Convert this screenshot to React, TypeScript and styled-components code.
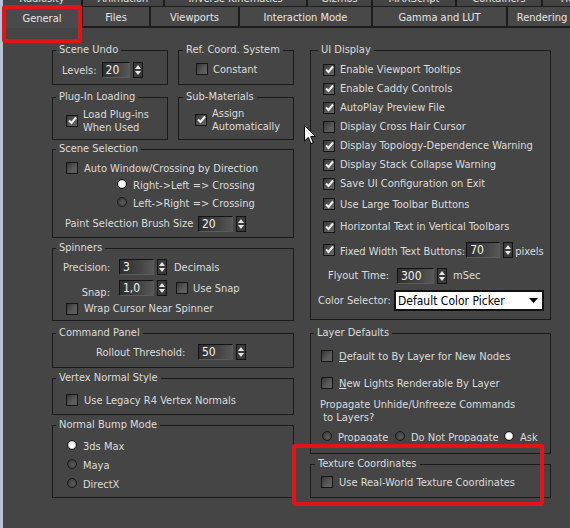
import React from "react";
import styled, { createGlobalStyle } from "styled-components";

const Global = createGlobalStyle`
  html, body { margin: 0; padding: 0; background: #454545; }
  body {
    font-family: "DejaVu Sans Condensed", "Liberation Sans", sans-serif;
    font-size: 11px;
    color: #dcdcdc;
  }
  * { box-sizing: border-box; }
`;

const Screen = styled.div`
  position: relative;
  width: 570px;
  height: 528px;
  overflow: hidden;
  display: flex;
  background: #454545;
`;

const Strip = styled.div`
  flex: none;
  width: 3px;
  background: #b9c3d3;
`;

const Main = styled.div`
  flex: 1;
  min-width: 0;
  display: flex;
  flex-direction: column;
`;

const TabRow = styled.div<{ $h: number }>`
  flex: none;
  display: flex;
  height: ${(p) => p.$h}px;
  overflow: hidden;
`;

const TopTab = styled.div<{ $w: number }>`
  flex: none;
  width: ${(p) => p.$w}px;
  height: 7px;
  display: flex;
  align-items: flex-end;
  justify-content: center;
  overflow: hidden;
  background: #434343;
  border-right: 2px solid #1c1c1c;
  border-bottom: 1px solid #1c1c1c;
  color: #e4e4e4;
  white-space: nowrap;
`;

const TopTabText = styled.span`
  line-height: 14px;
  margin-bottom: 0;
`;

const Tab = styled.div<{ $w: number; $active?: boolean }>`
  flex: none;
  width: ${(p) => p.$w}px;
  height: 21px;
  display: flex;
  align-items: center;
  justify-content: center;
  background: ${(p) => (p.$active ? "#4a4a4a" : "#484848")};
  border-right: 2px solid #1c1c1c;
  border-bottom: ${(p) => (p.$active ? "0" : "2px solid #1c1c1c")};
  color: #e6e6e6;
  white-space: nowrap;
  padding-top: 1px;
`;

const Content = styled.div`
  flex: 1;
  display: flex;
  gap: 16px;
  padding: 15px 0 0 49px;
`;

const Column = styled.div<{ $w: number }>`
  flex: none;
  width: ${(p) => p.$w}px;
  display: flex;
  flex-direction: column;
`;

const Pair = styled.div<{ $mt?: number }>`
  display: flex;
  gap: 10px;
  margin-top: ${(p) => p.$mt ?? 0}px;
`;

const Group = styled.fieldset<{ $h: number; $mt?: number; $w?: number }>`
  margin: ${(p) => p.$mt ?? 0}px 0 0 0;
  padding: 0;
  border: 1px solid #1a1a1a;
  height: ${(p) => p.$h}px;
  min-width: 0;
  ${(p) => (p.$w ? `width: ${p.$w}px; flex: none;` : "")}
`;

const Legend = styled.legend<{ $ml?: number }>`
  margin-left: ${(p) => p.$ml ?? 3}px;
  padding: 0 3px;
  line-height: 14px;
  font-size: 11px;
  color: #dcdcdc;
  white-space: nowrap;
`;

const Body = styled.div<{ $pt: number }>`
  display: flex;
  flex-direction: column;
  padding-top: ${(p) => p.$pt}px;
`;

const Row = styled.div<{ $h: number; $pl: number; $mt?: number; $end?: boolean; $clip?: boolean }>`
  display: flex;
  align-items: ${(p) => (p.$end ? "flex-start" : "center")};
  height: ${(p) => p.$h}px;
  padding-left: ${(p) => p.$pl}px;
  margin-top: ${(p) => p.$mt ?? 0}px;
  white-space: nowrap;
  overflow: ${(p) => (p.$clip ? "hidden" : "visible")};
`;

const Label = styled.span<{ $w?: number; $right?: boolean; $ml?: number; $dy?: number }>`
  flex: none;
  ${(p) => (p.$w ? `width: ${p.$w}px;` : "")}
  text-align: ${(p) => (p.$right ? "right" : "left")};
  margin-left: ${(p) => p.$ml ?? 0}px;
  position: relative;
  top: ${(p) => p.$dy ?? 0}px;
  line-height: 13px;
  color: #dcdcdc;
`;

const Lines = styled.span<{ $ml?: number }>`
  display: flex;
  flex-direction: column;
  margin-left: ${(p) => p.$ml ?? 0}px;
  line-height: 13px;
  color: #dcdcdc;
`;

const Box = styled.span<{ $ml?: number }>`
  flex: none;
  width: 12px;
  height: 12px;
  margin-left: ${(p) => p.$ml ?? 0}px;
  border: 1px solid #151515;
  background: linear-gradient(135deg, #363636 0%, #5a5a5a 60%, #626262 100%);
  display: inline-flex;
  align-items: center;
  justify-content: center;
`;

const RadioDot = styled.span<{ $on?: boolean }>`
  flex: none;
  width: 10px;
  height: 10px;
  border-radius: 50%;
  border: 1px solid #1a1a1a;
  background: ${(p) =>
    p.$on
      ? "radial-gradient(circle at 50% 50%, #ffffff 0 2.5px, #cfcfcf 3.5px, #8a8a8a 100%)"
      : "radial-gradient(circle at 60% 60%, #5c5c5c 0, #444444 60%, #262626 100%)"};
`;

const RadioItem = styled.span<{ $w?: number }>`
  display: flex;
  align-items: flex-start;
  ${(p) => (p.$w ? `width: ${p.$w}px; flex: none;` : "")}
`;

const RadioText = styled.span`
  margin-left: 6px;
  line-height: 14px;
  color: #dcdcdc;
`;

const Field = styled.span<{ $w: number; $ml?: number }>`
  flex: none;
  width: ${(p) => p.$w}px;
  height: 16px;
  margin-left: ${(p) => p.$ml ?? 0}px;
  border: 1px solid #121212;
  border-right-color: #5c5c5c;
  border-bottom-color: #5c5c5c;
  background: linear-gradient(90deg, #303030 0%, #444444 60%, #575757 100%);
  color: #f2f2f2;
  font-size: 12px;
  line-height: 14px;
  padding-left: 3px;
`;

const Arrows = styled.span`
  flex: none;
  width: 10px;
  height: 16px;
  margin-left: 3px;
  border: 1px solid #141414;
  background: #3b3b3b;
  display: flex;
  flex-direction: column;
  align-items: center;
  justify-content: center;
  gap: 2px;
`;

const Select = styled.span`
  flex: none;
  width: 150px;
  height: 21px;
  border: 2px solid #111;
  background: #fff;
  color: #000;
  display: flex;
  align-items: center;
  justify-content: space-between;
  padding: 0 4px 0 2px;
  font-size: 12px;
`;

const Highlight = styled.div<{ $x: number; $y: number; $w: number; $h: number }>`
  position: absolute;
  left: ${(p) => p.$x}px;
  top: ${(p) => p.$y}px;
  width: ${(p) => p.$w}px;
  height: ${(p) => p.$h}px;
  border: 4px solid #e2141a;
  border-radius: 3px;
  pointer-events: none;
`;

const Cursor = styled.svg`
  position: absolute;
  left: 304px;
  top: 125px;
`;

const Check = ({ on, ml }: { on?: boolean; ml?: number }) => (
  <Box $ml={ml}>
    {on && (
      <svg width="9" height="9" viewBox="0 0 9 9">
        <polyline points="1,4.5 3.5,7 8,1.5" fill="none" stroke="#f0f0f0" strokeWidth="2" />
      </svg>
    )}
  </Box>
);

const Spinner = ({ value, w, ml }: { value: string; w: number; ml?: number }) => (
  <>
    <Field $w={w} $ml={ml}>{value}</Field>
    <Arrows>
      <svg width="6" height="4" viewBox="0 0 6 4">
        <polygon points="3,0 6,4 0,4" fill="#e8e8e8" />
      </svg>
      <svg width="6" height="4" viewBox="0 0 6 4">
        <polygon points="0,0 6,0 3,4" fill="#e8e8e8" />
      </svg>
    </Arrows>
  </>
);

const topTabs: [string, number][] = [
  ["Radiosity", 80],
  ["Animation", 82],
  ["Inverse Kinematics", 143],
  ["Gizmos", 65],
  ["MAXScript", 84],
  ["Containers", 86],
  ["Help", 60],
];

const tabs: [string, number][] = [
  ["General", 80],
  ["Files", 68],
  ["Viewports", 89],
  ["Interaction Mode", 133],
  ["Gamma and LUT", 135],
  ["Rendering", 70],
];

const uiRows: [string, boolean, number][] = [
  ["Enable Viewport Tooltips", true, 19],
  ["Enable Caddy Controls", true, 19],
  ["AutoPlay Preview File", true, 19],
  ["Display Cross Hair Cursor", false, 19],
  ["Display Topology-Dependence Warning", true, 19],
  ["Display Stack Collapse Warning", true, 19],
  ["Save UI Configuration on Exit", true, 19],
  ["Use Large Toolbar Buttons", true, 22],
  ["Horizontal Text in Vertical Toolbars", true, 23],
];

export default function App() {
  return (
    <>
      <Global />
      <Screen>
        <Strip />
        <Main>
          <TabRow $h={7}>
            {topTabs.map(([t, w]) => (
              <TopTab key={t} $w={w}>
                <TopTabText>{t}</TopTabText>
              </TopTab>
            ))}
          </TabRow>
          <TabRow $h={21}>
            {tabs.map(([t, w], i) => (
              <Tab key={t} $w={w} $active={i === 0}>
                {t}
              </Tab>
            ))}
          </TabRow>
          <Content>
            <Column $w={242}>
              <Pair>
                <Group $h={42} $w={116}>
                  <Legend>Scene Undo</Legend>
                  <Body $pt={5}>
                    <Row $h={16} $pl={9}>
                      <Label>Levels:</Label>
                      <Spinner value="20" w={28} ml={5} />
                    </Row>
                  </Body>
                </Group>
                <Group $h={42} $w={116}>
                  <Legend $ml={4}>Ref. Coord. System</Legend>
                  <Body $pt={4}>
                    <Row $h={16} $pl={17}>
                      <Check />
                      <Label $ml={5}>Constant</Label>
                    </Row>
                  </Body>
                </Group>
              </Pair>
              <Pair $mt={5}>
                <Group $h={50} $w={116}>
                  <Legend>Plug-In Loading</Legend>
                  <Body $pt={3}>
                    <Row $h={27} $pl={13}>
                      <Check on />
                      <Lines $ml={5}>
                        <span>Load Plug-ins</span>
                        <span>When Used</span>
                      </Lines>
                    </Row>
                  </Body>
                </Group>
                <Group $h={50} $w={116}>
                  <Legend $ml={4}>Sub-Materials</Legend>
                  <Body $pt={2}>
                    <Row $h={27} $pl={16}>
                      <Check on />
                      <Lines $ml={5}>
                        <span>Assign</span>
                        <span>Automatically</span>
                      </Lines>
                    </Row>
                  </Body>
                </Group>
              </Pair>
              <Group $h={96} $mt={2}>
                <Legend>Scene Selection</Legend>
                <Body $pt={3}>
                  <Row $h={18} $pl={13}>
                    <Check />
                    <Label $ml={6}>Auto Window/Crossing by Direction</Label>
                  </Row>
                  <Row $h={18} $pl={64}>
                    <RadioItem>
                      <RadioDot $on />
                      <RadioText>Right-&gt;Left =&gt; Crossing</RadioText>
                    </RadioItem>
                  </Row>
                  <Row $h={18} $pl={64}>
                    <RadioItem>
                      <RadioDot />
                      <RadioText>Left-&gt;Right =&gt; Crossing</RadioText>
                    </RadioItem>
                  </Row>
                  <Row $h={21} $pl={12}>
                    <Label $w={133}>Paint Selection Brush Size</Label>
                    <Spinner value="20" w={35} />
                  </Row>
                </Body>
              </Group>
              <Group $h={80} $mt={3}>
                <Legend>Spinners</Legend>
                <Body $pt={3}>
                  <Row $h={18} $pl={10}>
                    <Label $w={47} $right>Precision:</Label>
                    <Spinner value="3" w={35} ml={9} />
                    <Label $ml={7}>Decimals</Label>
                  </Row>
                  <Row $h={24} $pl={10}>
                    <Label $w={47} $right $dy={4}>Snap:</Label>
                    <Spinner value="1,0" w={35} ml={9} />
                    <Check ml={9} />
                    <Label $ml={5}>Use Snap</Label>
                  </Row>
                  <Row $h={17} $pl={13}>
                    <Check />
                    <Label $ml={6}>Wrap Cursor Near Spinner</Label>
                  </Row>
                </Body>
              </Group>
              <Group $h={42} $mt={5}>
                <Legend>Command Panel</Legend>
                <Body $pt={4}>
                  <Row $h={16} $pl={43}>
                    <Label $w={102}>Rollout Threshold:</Label>
                    <Spinner value="50" w={35} />
                  </Row>
                </Body>
              </Group>
              <Group $h={44} $mt={3}>
                <Legend>Vertex Normal Style</Legend>
                <Body $pt={7}>
                  <Row $h={16} $pl={13}>
                    <Check />
                    <Label $ml={6}>Use Legacy R4 Vertex Normals</Label>
                  </Row>
                </Body>
              </Group>
              <Group $h={80} $mt={3}>
                <Legend>Normal Bump Mode</Legend>
                <Body $pt={5}>
                  {["3ds Max", "Maya", "DirectX"].map((t, i) => (
                    <Row key={t} $h={19} $pl={14}>
                      <RadioItem>
                        <RadioDot $on={i === 0} />
                        <RadioText>{t}</RadioText>
                      </RadioItem>
                    </Row>
                  ))}
                </Body>
              </Group>
            </Column>
            <Column $w={241}>
              <Group $h={277}>
                <Legend $ml={7}>UI Display</Legend>
                <Body $pt={3}>
                  {uiRows.map(([t, on, h]) => (
                    <Row key={t} $h={h} $pl={12}>
                      <Check on={on} />
                      <Label $ml={5}>{t}</Label>
                    </Row>
                  ))}
                  <Row $h={23} $pl={12}>
                    <Check on />
                    <Label $ml={5} $dy={2}>Fixed Width Text Buttons:</Label>
                    <Spinner value="70" w={34} ml={1} />
                    <Label $ml={2} $dy={2}>pixels</Label>
                  </Row>
                  <Row $h={29} $pl={17}>
                    <Label $w={69}>Flyout Time:</Label>
                    <Spinner value="300" w={37} />
                    <Label $ml={6}>mSec</Label>
                  </Row>
                  <Row $h={21} $pl={7}>
                    <Label $w={76}>Color Selector:</Label>
                    <Select>
                      <span>Default Color Picker</span>
                      <svg width="9" height="5" viewBox="0 0 9 5">
                        <polygon points="0,0 9,0 4.5,5" fill="#000" />
                      </svg>
                    </Select>
                  </Row>
                </Body>
              </Group>
              <Group $h={128} $mt={6}>
                <Legend>Layer Defaults</Legend>
                <Body $pt={7}>
                  <Row $h={18} $pl={10}>
                    <Check />
                    <Label $ml={6}>
                      <u>D</u>efault to By Layer for New Nodes
                    </Label>
                  </Row>
                  <Row $h={18} $pl={10} $mt={9}>
                    <Check />
                    <Label $ml={6}>
                      <u>N</u>ew Lights Renderable By Layer
                    </Label>
                  </Row>
                  <Row $h={26} $pl={9} $mt={6}>
                    <Lines>
                      <span>Propagate Unhide/Unfreeze Commands</span>
                      <span>&nbsp;to Layers?</span>
                    </Lines>
                  </Row>
                  <Row $h={11} $pl={11} $mt={7} $end $clip>
                    <RadioItem $w={73}>
                      <RadioDot />
                      <RadioText>Propagate</RadioText>
                    </RadioItem>
                    <RadioItem $w={109}>
                      <RadioDot />
                      <RadioText>Do Not Propagate</RadioText>
                    </RadioItem>
                    <RadioItem>
                      <RadioDot $on />
                      <RadioText>Ask</RadioText>
                    </RadioItem>
                  </Row>
                </Body>
              </Group>
              <Group $h={41} $mt={3}>
                <Legend $ml={4}>Texture Coordinates</Legend>
                <Body $pt={3}>
                  <Row $h={16} $pl={10}>
                    <Check />
                    <Label $ml={6}>Use Real-World Texture Coordinates</Label>
                  </Row>
                </Body>
              </Group>
            </Column>
          </Content>
        </Main>
        <Highlight $x={2} $y={5} $w={80} $h={38} />
        <Highlight $x={292} $y={444} $w={252} $h={62} />
        <Cursor width="13" height="20" viewBox="0 0 13 20">
          <path d="M0.5,0.5 L0.5,16 L4.3,12.4 L7,18.6 L9.3,17.6 L6.7,11.6 L11.5,11.6 Z" fill="#fff" stroke="#000" strokeWidth="1" />
        </Cursor>
      </Screen>
    </>
  );
}
